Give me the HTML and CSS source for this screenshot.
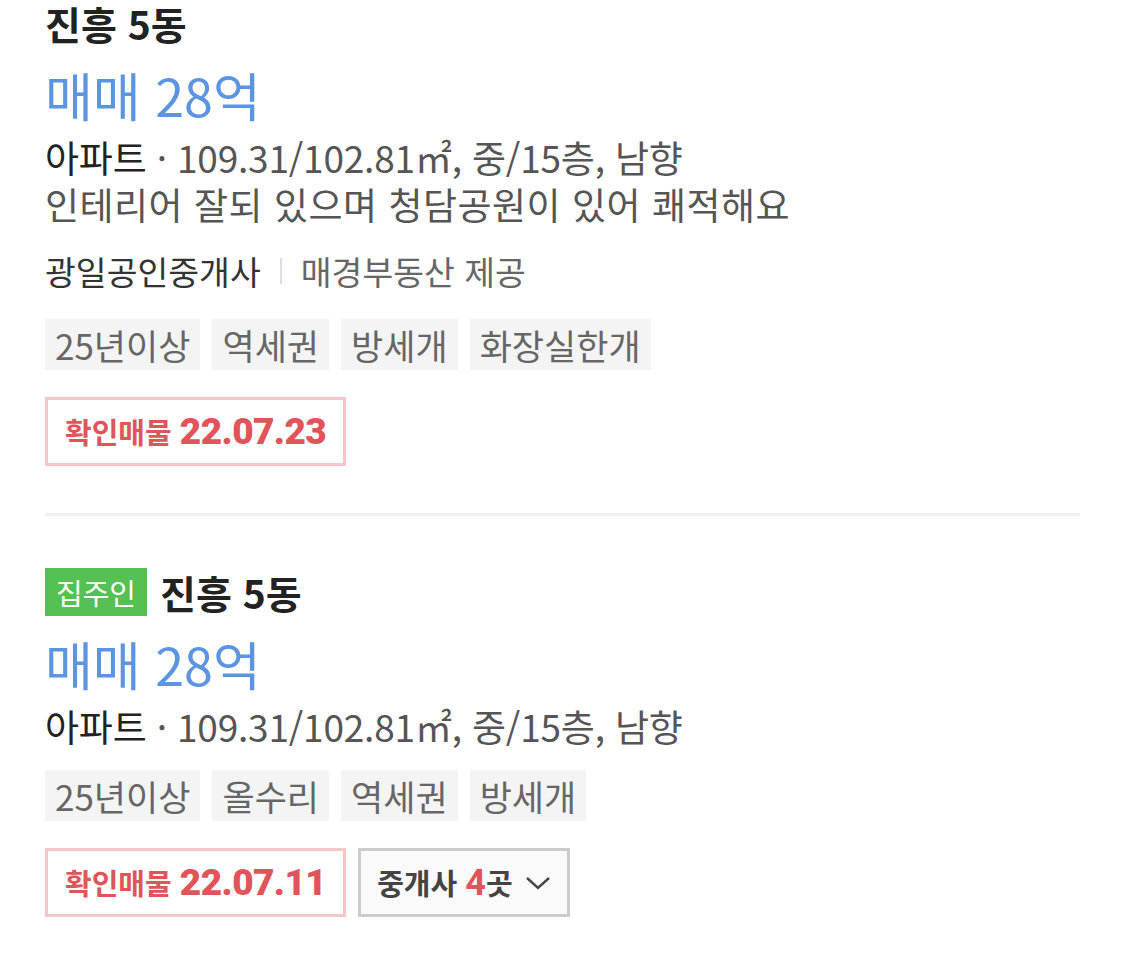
FILE: index.html
```html
<!DOCTYPE html>
<html lang="ko">
<head>
  <meta charset="UTF-8" />
  <meta name="viewport" content="width=device-width, initial-scale=1.0" />
  <title>매물 목록</title>
  <link rel="stylesheet" href="styles.css">
</head>
<body>
  <ul class="list">
    <li class="item">
      <div class="title">진흥 5동</div>
      <div class="price">매매 28억</div>
      <div class="spec"><strong>아파트</strong> · 109.31/102.81㎡, 중/15층, 남향</div>
      <div class="desc">인테리어 잘되 있으며 청담공원이 있어 쾌적해요</div>
      <div class="agent">광일공인중개사<span class="sep"></span><span class="cp">매경부동산 제공</span></div>
      <div class="tags">
        <span class="tag">25년이상</span>
        <span class="tag">역세권</span>
        <span class="tag">방세개</span>
        <span class="tag">화장실한개</span>
      </div>
      <div class="actions">
        <span class="confirm">확인매물 <b>22.07.23</b></span>
      </div>
    </li>
    <li class="item">
      <div class="title"><span class="owner">집주인</span>진흥 5동</div>
      <div class="price">매매 28억</div>
      <div class="spec"><strong>아파트</strong> · 109.31/102.81㎡, 중/15층, 남향</div>
      <div class="tags">
        <span class="tag">25년이상</span>
        <span class="tag">올수리</span>
        <span class="tag">역세권</span>
        <span class="tag">방세개</span>
      </div>
      <div class="actions">
        <span class="confirm">확인매물 <b>22.07.11</b></span>
        <button class="brokers"><span>중개사 <em>4</em>곳</span>
          <svg width="26" height="16" viewBox="0 0 26 16"><path d="M2 3l11 10 11-10" fill="none" stroke="#444" stroke-width="2.4"/></svg>
        </button>
      </div>
    </li>
  </ul>
</body>
</html>
```

FILE: styles.css
```css
* {
  box-sizing: border-box;
}
body {
  margin: 0;
  background: #fff;
  font-family: "Noto Sans CJK KR", "Noto Sans", sans-serif;
  color: #222;
}
.list {
  list-style: none;
  margin: 0;
  padding: 0 45px;
}
.item {
  padding: 0 0 47px;
}
.item:first-child {
  margin-top: -1px;
}
.item + .item {
  border-top: 3px solid #f0f0f0;
  padding-top: 52px;
}
.title {
  display: flex;
  align-items: center;
  font-size: 39px;
  font-weight: 700;
  line-height: 48px;
}
.owner {
  background: #55c152;
  color: #fff;
  font-size: 29px;
  font-weight: 400;
  line-height: 48px;
  padding: 0 11px;
  margin-right: 13px;
}
.price {
  color: #5b94e0;
  font-size: 52px;
  line-height: 66px;
  margin-top: 15px;
}
.spec, .desc {
  font-size: 37px;
  line-height: 47px;
  color: #555;
}
.spec {
  margin-top: 6px;
  letter-spacing: -0.2px;
}
.spec strong {
  color: #222;
  font-weight: 400;
}
.desc {
  letter-spacing: 0.5px;
}
.agent {
  display: flex;
  align-items: center;
  font-size: 33.5px;
  color: #333;
  line-height: 44px;
  margin-top: 21px;
}
.sep {
  width: 2px;
  height: 26px;
  background: #ddd;
  margin: 0 19px;
}
.cp {
  color: #666;
}
.tags {
  display: flex;
  gap: 12px;
  margin-top: 26px;
}
.spec + .tags {
  margin-top: 20px;
}
.tag {
  background: #f4f4f4;
  color: #666;
  font-size: 35px;
  line-height: 51px;
  padding: 0 10px;
}
.actions {
  display: flex;
  gap: 12px;
  margin-top: 27px;
}
.confirm {
  border: 3px solid #f5c7ca;
  color: #e0545a;
  font-size: 29px;
  font-weight: 700;
  line-height: 63px;
  padding: 0 17px;
}
.confirm b {
  font-family: Roboto, "Noto Sans", sans-serif;
  font-size: 37px;
  letter-spacing: -0.6px;
}
.brokers {
  display: flex;
  align-items: center;
  border: 3px solid #ccc;
  background: #fafafa;
  color: #444;
  font-family: inherit;
  font-size: 29px;
  font-weight: 700;
  padding: 0 16px;
}
.brokers em {
  font-style: normal;
  color: #e0545a;
  font-family: Roboto, "Noto Sans", sans-serif;
  font-size: 36px;
}
.brokers svg {
  margin-left: 12px;
}
```
